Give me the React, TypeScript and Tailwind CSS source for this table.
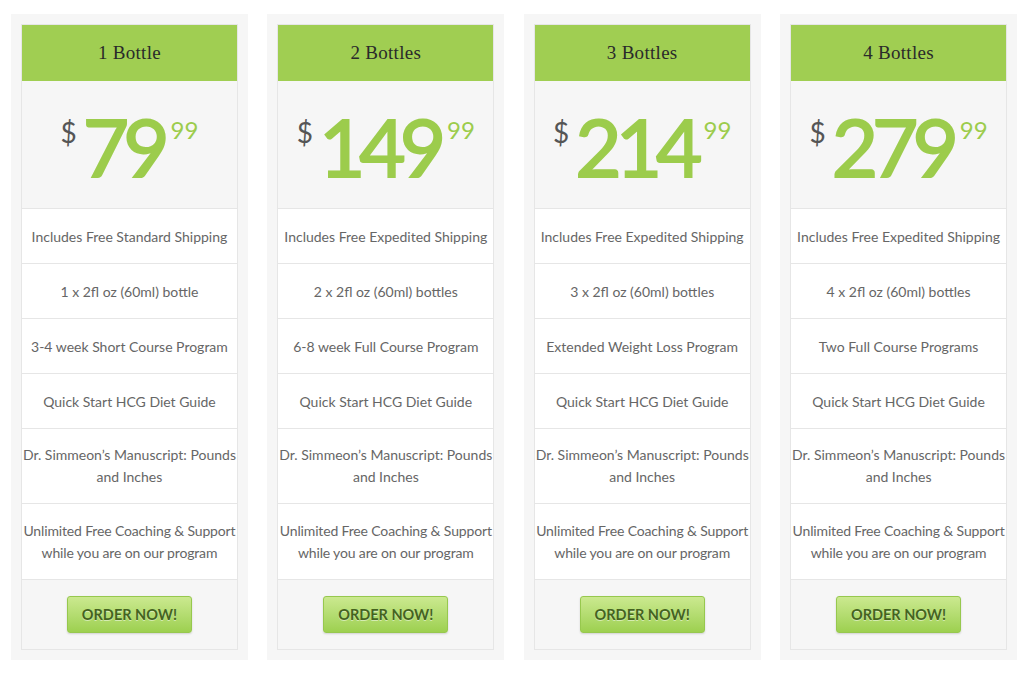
import React from 'react';

const plans = [
  {
    name: '1 Bottle',
    price: '79',
    features: [
      'Includes Free Standard Shipping',
      '1 x 2fl oz (60ml) bottle',
      '3-4 week Short Course Program',
      'Quick Start HCG Diet Guide',
    ],
  },
  {
    name: '2 Bottles',
    price: '149',
    features: [
      'Includes Free Expedited Shipping',
      '2 x 2fl oz (60ml) bottles',
      '6-8 week Full Course Program',
      'Quick Start HCG Diet Guide',
    ],
  },
  {
    name: '3 Bottles',
    price: '214',
    features: [
      'Includes Free Expedited Shipping',
      '3 x 2fl oz (60ml) bottles',
      'Extended Weight Loss Program',
      'Quick Start HCG Diet Guide',
    ],
  },
  {
    name: '4 Bottles',
    price: '279',
    features: [
      'Includes Free Expedited Shipping',
      '4 x 2fl oz (60ml) bottles',
      'Two Full Course Programs',
      'Quick Start HCG Diet Guide',
    ],
  },
];

const PlanCard = ({ plan }: { plan: (typeof plans)[number] }) => {
  return (
    <div className="bg-[#f6f6f6] p-[10px]">
      <div className="border border-[#e6e6e6] bg-white">
        <div className="h-[56px] bg-[#a0ce52] flex items-center justify-center text-[19px] text-[#2a2a2a] font-['Liberation_Serif',serif] tracking-[0.3px]">
          {plan.name}
        </div>
        <div className="h-[128px] bg-[#f6f6f6] border-b border-[#e6e6e6] flex items-start justify-center pt-[25px] font-['Lato',sans-serif]">
          <span className="text-[28px] text-[#555] leading-none mt-[12px] mr-[6px]">$</span>
          <span className="text-[80px] leading-none text-[#9ccc4c] tracking-[-6px] [-webkit-text-stroke:2px_#9ccc4c]">{plan.price}</span>
          <span className="text-[24px] leading-none text-[#9ccc4c] mt-[12px] ml-[7px]">99</span>
        </div>
        <div className="font-['Lato',sans-serif] text-[14px] text-[#666] text-center">
          {plan.features.map((f) => (
            <div key={f} className="h-[55px] border-b border-[#e6e6e6] flex items-center justify-center">
              {f}
            </div>
          ))}
          <div className="h-[75px] border-b border-[#e6e6e6] flex items-center justify-center leading-[22px]">
            Dr. Simmeon’s Manuscript: Pounds and Inches
          </div>
          <div className="h-[76px] border-b border-[#e6e6e6] flex items-center justify-center leading-[22px] tracking-[-0.15px] whitespace-pre-line">
            {'Unlimited Free Coaching & Support\nwhile you are on our program'}
          </div>
        </div>
        <div className="h-[69px] bg-[#f6f6f6] flex items-center justify-center">
          <button className="w-[125px] h-[37px] rounded-[3px] border border-[#97c84e] bg-gradient-to-b from-[#cbe98f] to-[#9dd04f] shadow-[0_1px_2px_rgba(0,0,0,0.15)] text-[14.5px] text-[#44631f] font-['Lato',sans-serif] font-bold [text-shadow:0_1px_0_rgba(255,255,255,0.5)]">
            ORDER NOW!
          </button>
        </div>
      </div>
    </div>
  );
};

const App = () => {
  return (
    <div className="w-[1024px] h-[674px] bg-white pt-[14px] pl-[11px]">
      <div className="w-[1006px] grid grid-cols-4 gap-x-[19.5px]">
        {plans.map((p) => (
          <PlanCard key={p.name} plan={p} />
        ))}
      </div>
    </div>
  );
};

export default App;
